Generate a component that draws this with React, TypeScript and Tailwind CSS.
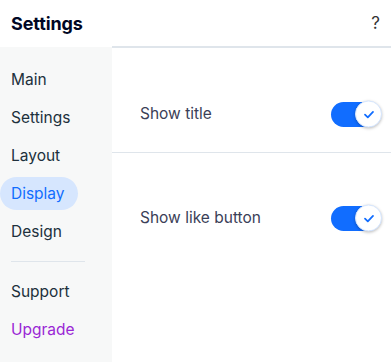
import { useState } from 'react'

const NAV = ['Main', 'Settings', 'Layout', 'Display', 'Design']

function Toggle({ on, onChange }: { on: boolean; onChange: () => void }) {
  return (
    <button
      onClick={onChange}
      className={`relative w-[50px] h-[25px] rounded-full ${on ? 'bg-[#116dff]' : 'bg-[#c9d4e0]'}`}
    >
      <span
        className={`absolute top-1/2 -translate-y-1/2 w-[27px] h-[27px] rounded-full bg-white border border-[#d6e6fe] shadow-[0_1px_3px_rgba(0,0,0,0.25)] flex items-center justify-center ${on ? 'right-[-1px]' : 'left-[-1px]'}`}
      >
        {on && (
          <svg width="12" height="10" viewBox="0 0 12 10" fill="none">
            <path d="M2 5.2 L4.8 7.8 L10 2.4" stroke="#116dff" strokeWidth="1.8" strokeLinecap="round" strokeLinejoin="round" />
          </svg>
        )}
      </span>
    </button>
  )
}

export default function App() {
  const [showTitle, setShowTitle] = useState(true)
  const [showLike, setShowLike] = useState(true)

  return (
    <div className="w-[391px] h-[362px] bg-white flex flex-col text-[#20303c]" style={{ fontFamily: 'Inter, "Noto Sans", sans-serif' }}>
      {/* Header */}
      <div className="h-[47px] flex items-center justify-between pl-[11px] pr-[11px]">
        <span className="text-[18px] font-bold text-[#000624] tracking-[-0.1px]">Settings</span>
        <span className="text-[17px] text-[#333]">?</span>
      </div>

      <div className="flex flex-1">
        {/* Sidebar */}
        <div className="w-[112px] bg-[#f7f8f8] flex flex-col pt-[16px] text-[15.5px]">
          {NAV.map((item) => (
            <div
              key={item}
              className={`h-[33px] mb-[5px] flex items-center pl-[11px] w-[78px] rounded-full ${item === 'Display' ? 'bg-[#d6e6fe] text-[#116dff]' : ''}`}
            >
              {item}
            </div>
          ))}
          <div className="mx-[11px] w-[74px] border-t border-[#dfe5eb] mt-[8px] mb-[13px]" />
          <div className="h-[33px] mb-[5px] flex items-center pl-[11px]">Support</div>
          <div className="h-[33px] flex items-center pl-[11px] text-[#9a27d5]">Upgrade</div>
        </div>

        {/* Content */}
        <div className="flex-1 flex flex-col border-t-2 border-[#dfe5eb] -mt-[1px]">
          <div className="h-[105px] flex items-center justify-between pl-[28px] pr-[10px] pt-[28px] border-b border-[#dfe5eb]">
            <span className="text-[15.5px] text-[#3b4057]">Show title</span>
            <Toggle on={showTitle} onChange={() => setShowTitle(!showTitle)} />
          </div>
          <div className="h-[105px] flex items-center justify-between pl-[28px] pr-[10px] pt-[25px]">
            <span className="text-[15.5px] text-[#3b4057]">Show like button</span>
            <Toggle on={showLike} onChange={() => setShowLike(!showLike)} />
          </div>
        </div>
      </div>
    </div>
  )
}
